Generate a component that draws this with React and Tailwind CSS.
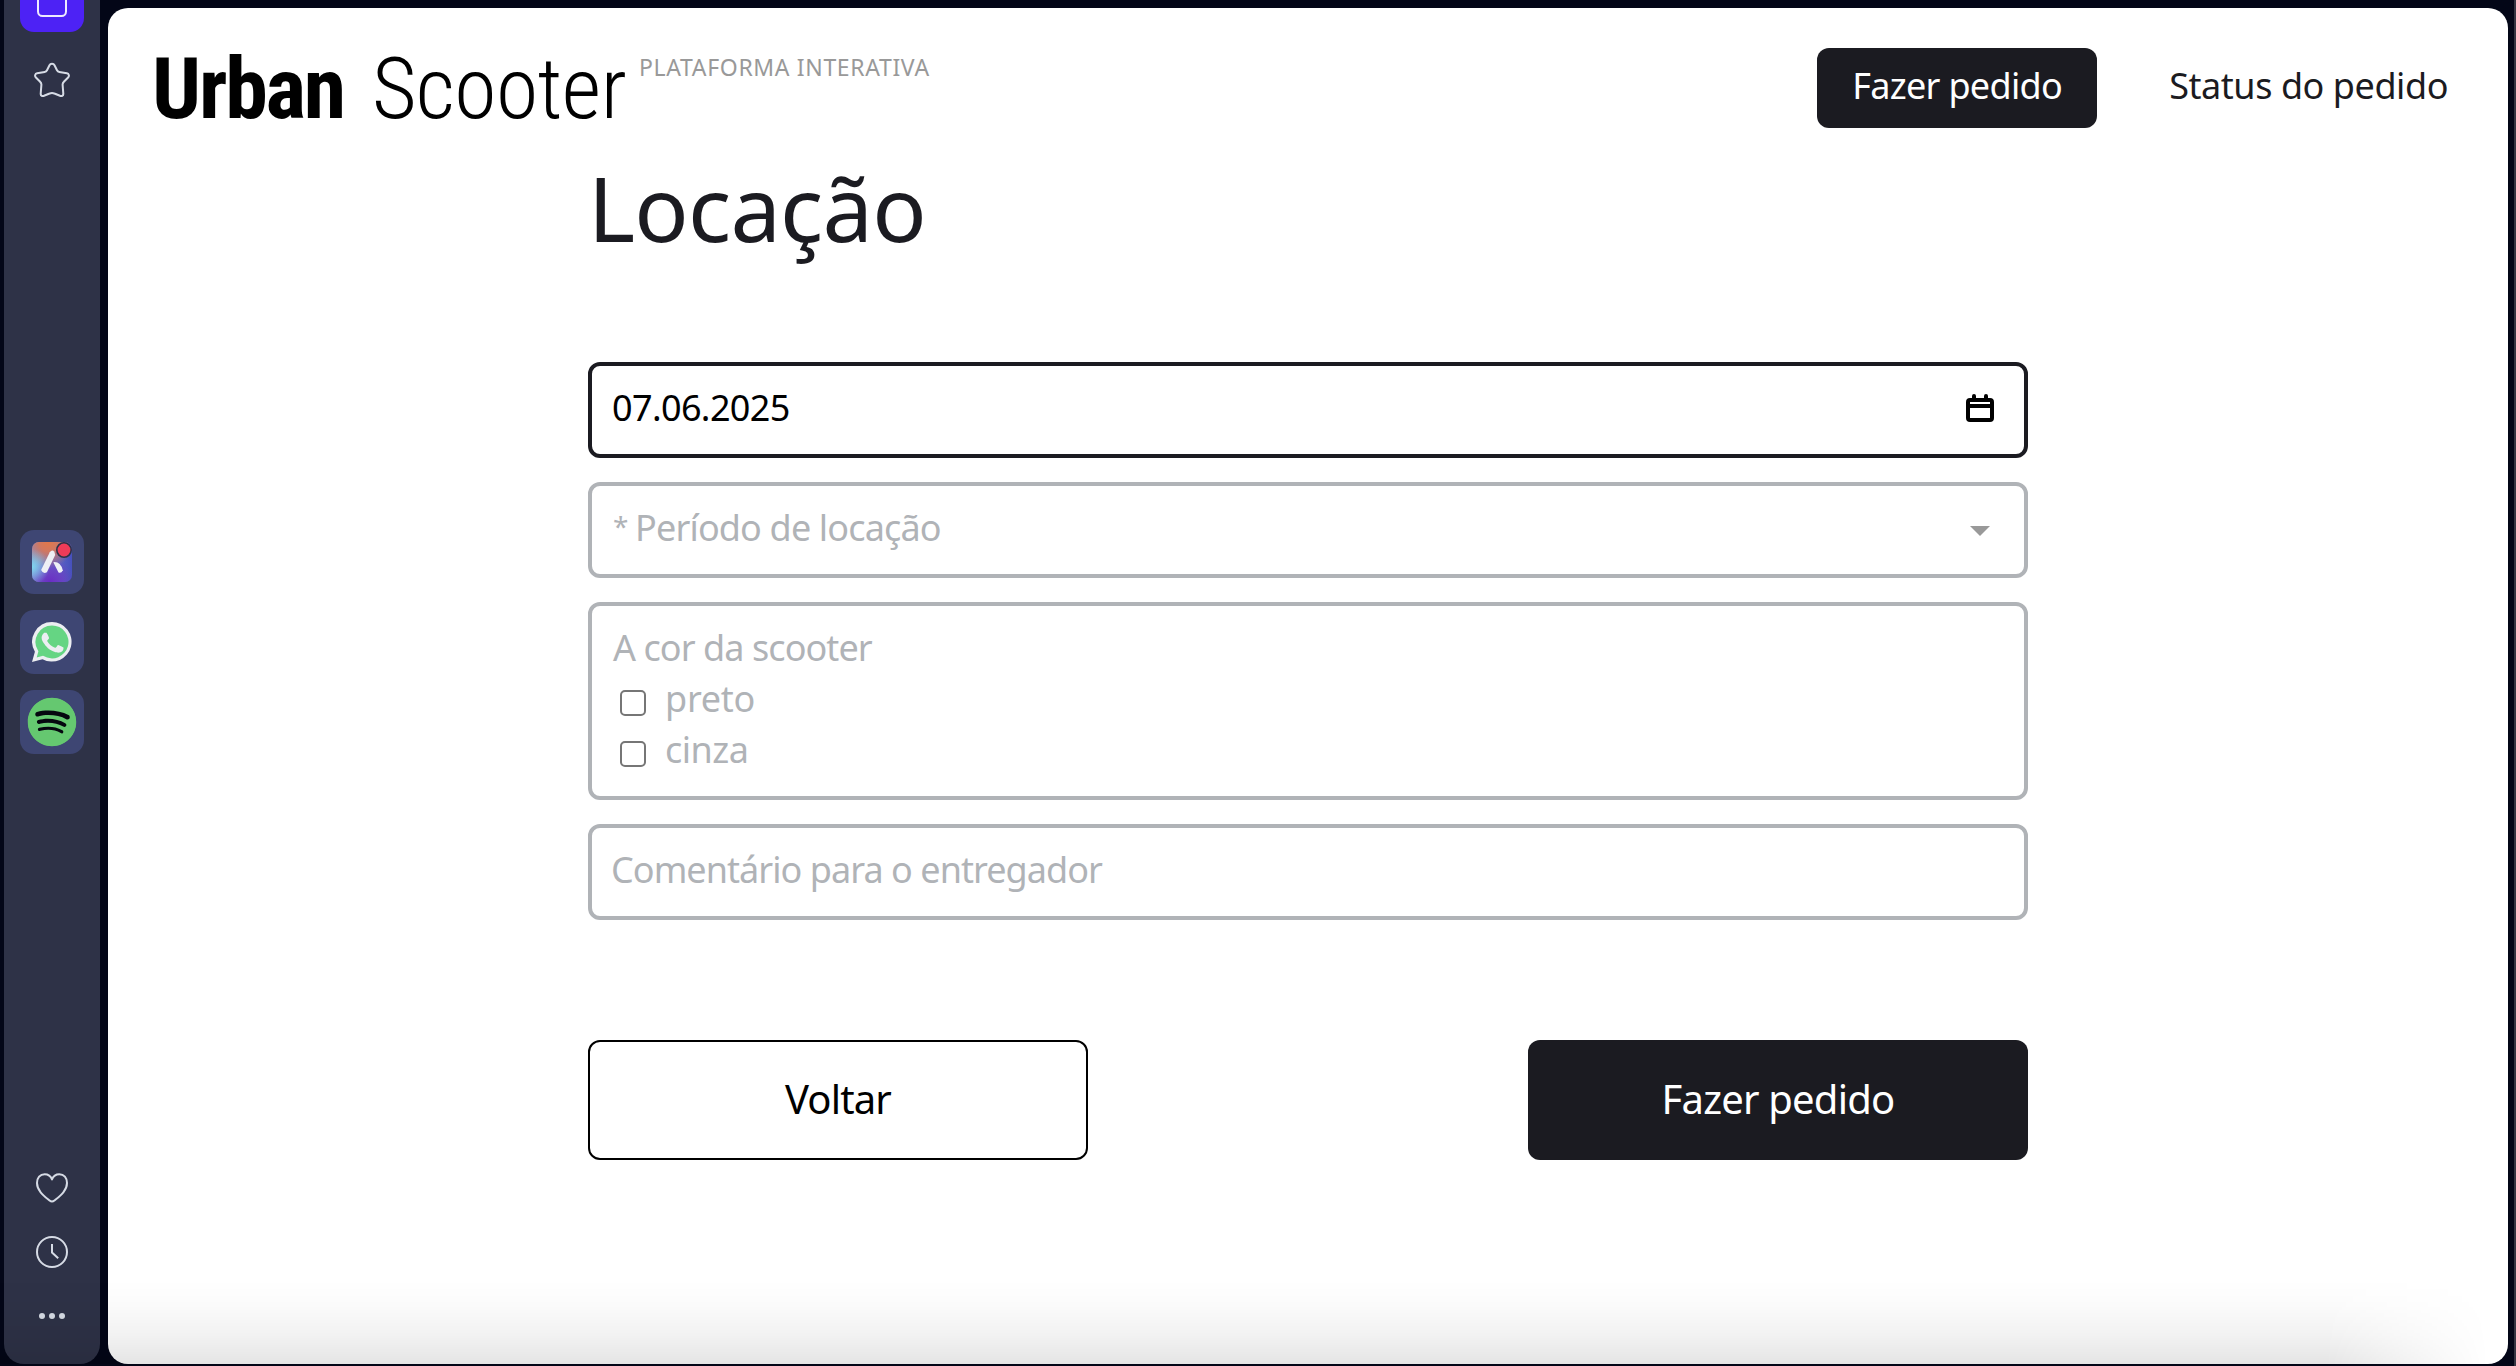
import React from "react";
import { FaSpotify } from "react-icons/fa";

function SideTile({ children }) {
  return (
    <div className="flex h-16 w-16 items-center justify-center rounded-[14px] bg-[#3e4673]">
      {children}
    </div>
  );
}

function AriaIcon() {
  return (
    <svg viewBox="0 0 40 40" className="h-10 w-10 overflow-visible">
      <defs>
        <linearGradient id="ariaBase" x1="0" y1="0.5" x2="1" y2="0.5">
          <stop offset="0" stopColor="#8a8fd0" />
          <stop offset="1" stopColor="#4650bd" />
        </linearGradient>
        <radialGradient id="ariaOrange" cx="0.4" cy="0" r="0.65">
          <stop offset="0" stopColor="#e2784a" />
          <stop offset="0.35" stopColor="#d2785f" />
          <stop offset="1" stopColor="#d2785f" stopOpacity="0" />
        </radialGradient>
        <radialGradient id="ariaCyan" cx="0" cy="0.62" r="0.45">
          <stop offset="0" stopColor="#7fd6ee" />
          <stop offset="1" stopColor="#7fd6ee" stopOpacity="0" />
        </radialGradient>
        <radialGradient id="ariaPurple" cx="0.45" cy="1" r="0.6">
          <stop offset="0" stopColor="#6a2cc4" />
          <stop offset="0.5" stopColor="#6c3bc4" stopOpacity="0.8" />
          <stop offset="1" stopColor="#6c3bc4" stopOpacity="0" />
        </radialGradient>
      </defs>
      <rect width="40" height="40" rx="7" fill="url(#ariaBase)" />
      <rect width="40" height="40" rx="7" fill="url(#ariaPurple)" />
      <rect width="40" height="40" rx="7" fill="url(#ariaOrange)" />
      <rect width="40" height="40" rx="7" fill="url(#ariaCyan)" />
      <path d="M17.800 10.200q2.200-3 4.600-.4l.8 3.200-8.300 17.200q-3.600 2.400-5.800-2.200z" fill="#eef0f5" />
      <path d="M21.300 20.200q7-1 9.500 8-1.400 3.400-4.300 2.300z" fill="#eef0f5" />
      <circle cx="32" cy="8" r="7.200" fill="#ef3b58" stroke="#2e3247" strokeWidth="1.600" />
    </svg>
  );
}

function WhatsAppIcon() {
  return (
    <svg viewBox="0 0 40 40" className="h-10 w-10">
      <path
        d="M20 0A19.800 19.800 0 0 0 2.900 29.800L0 40l10.500-2.700A19.800 19.800 0 1 0 20 0z"
        fill="#eceef2"
      />
      <path
        d="M20 3.400A16.500 16.500 0 0 0 6 28.600l.4.700-1.700 6.100 6.300-1.600.6.300A16.500 16.500 0 1 0 20 3.400z"
        fill="#65d583"
      />
      <path
        d="M15.100 11.700c-.4-.9-.8-.9-1.200-.9h-1c-.4 0-1 .1-1.400.6-.5.500-1.900 1.800-1.900 4.400s1.900 5.100 2.200 5.500c.3.400 3.700 5.900 9.200 8 4.500 1.800 5.500 1.400 6.500 1.300s3.200-1.300 3.600-2.600c.5-1.200.5-2.300.3-2.500-.1-.2-.5-.3-1-.6s-3.200-1.600-3.700-1.700c-.5-.2-.8-.3-1.200.2-.3.600-1.400 1.800-1.700 2.100-.3.400-.6.400-1.200.1s-2.300-.8-4.300-2.600c-1.600-1.400-2.700-3.200-3-3.700-.3-.6 0-.8.200-1.100.3-.3.600-.6.800-.9.300-.4.400-.6.600-.9.200-.4.100-.7 0-1s-1.200-2.900-1.800-3.700z"
        fill="#eceef2"
      />
    </svg>
  );
}

function Sidebar() {
  return (
    <aside className="ml-1 flex h-[1364px] w-24 flex-col items-center rounded-b-[20px] bg-[#2e3247] text-[#d6dbe5]">
      <div className="flex h-8 w-16 items-start justify-center rounded-b-[14px] bg-[#4d22f5]">
        <svg viewBox="0 0 32 18" className="h-[18px] w-8" fill="none" stroke="#eeeaff" strokeWidth="2">
          <path d="M2 0v11.500a4.500 4.500 0 0 0 4.500 4.500h19a4.500 4.500 0 0 0 4.500-4.500V0" />
        </svg>
      </div>
      <svg viewBox="0 0 36 36" className="mt-[30px] h-9 w-9" fill="none" stroke="currentColor" strokeWidth="2" strokeLinejoin="round">
        <path d="M15.500 3.200c.9-1.800 4.100-1.800 5 0l2.500 5.100c.5 1 1.300 1.600 2.300 1.700l7.600 1.300c2 .4 2.700 2.800 1.200 4.200l-4 4c-1.100 1.100-1.600 2-1.500 3.200l.7 9c.1 2-1.800 2.900-3.300 2.100l-5.600-2.300c-1.500-.7-3.300-.7-4.800 0L10 33.800c-1.500.8-3.400-.1-3.300-2.100l.7-9c.1-1.200-.4-2.100-1.500-3.200l-4-4c-1.500-1.400-.8-3.800 1.200-4.200l7.600-1.300c1-.1 1.800-.7 2.300-1.700z" />
      </svg>
      <div className="mt-[432px] flex flex-col gap-4">
        <SideTile><AriaIcon /></SideTile>
        <SideTile><WhatsAppIcon /></SideTile>
        <SideTile>
          <div className="flex h-12 w-12 items-center justify-center rounded-full bg-[radial-gradient(#05070f_60%,#65c870_61%)]">
            <FaSpotify className="h-[50px] w-[50px] shrink-0 text-[#65c870]" />
          </div>
        </SideTile>
      </div>
      <div className="mt-auto flex flex-col items-center pb-[45px]">
        <svg viewBox="0 0 34 30" className="h-[30px] w-[34px]" fill="none" stroke="currentColor" strokeWidth="2" strokeLinejoin="round">
          <path d="M17 6.500C15.700 3 12.800 1.200 9.700 1.200 5 1.200 2 5 2 10c0 7.500 6.500 12.500 12.600 17.600 1.700 1.400 3.100 1.400 4.800 0C25.500 22.500 32 17.500 32 10c0-5-3-8.800-7.700-8.800-3.100 0-6 1.800-7.300 5.300z" />
        </svg>
        <svg viewBox="0 0 34 34" className="mt-8 h-[34px] w-[34px]" fill="none" stroke="currentColor" strokeWidth="2">
          <circle cx="17" cy="17" r="15" />
          <path d="M17 9v8.500l6.200 5.800" />
        </svg>
        <div className="mt-[44px] flex gap-1">
          <i className="h-1.5 w-1.5 rounded-full bg-current" />
          <i className="h-1.5 w-1.5 rounded-full bg-current" />
          <i className="h-1.5 w-1.5 rounded-full bg-current" />
        </div>
      </div>
    </aside>
  );
}

function Header() {
  return (
    <header className="flex h-[139px] items-start pl-12">
      <div className="flex whitespace-nowrap pt-[29px] font-['Roboto_Condensed'] text-[86px] leading-[104px] text-black">
        <span className="-ml-1 w-[220px] font-bold tracking-[-2.2px]">Urban</span>
        <span className="w-[267px] font-light tracking-[-0.6px]">Scooter</span>
      </div>
      <span className="pt-[45px] text-[23px] leading-[28px] tracking-[0.65px] text-[#999]">
        PLATAFORMA INTERATIVA
      </span>
      <nav className="ml-auto flex pr-[60px] pt-10 text-[36px]">
        <button className="h-20 w-[280px] rounded-[12px] bg-[#1b1b21] pb-1 tracking-[-0.69px] text-white">
          Fazer pedido
        </button>
        <button className="ml-[72px] h-20 whitespace-nowrap pb-1 tracking-[-0.44px] text-[#1b1b21]">
          Status do pedido
        </button>
      </nav>
    </header>
  );
}

function ColorOption({ label, tracking }) {
  return (
    <label className="flex h-[51px] items-center pl-[7px]">
      <input type="checkbox" className="mt-[9px] h-[26px] w-[26px] appearance-none rounded-[5px] border-2 border-[#767676] bg-white" />
      <span className={"ml-[19px] leading-[51px] " + tracking}>{label}</span>
    </label>
  );
}

function RentForm() {
  return (
    <main className="ml-[480px] w-[1440px] text-[36px] text-[#b0b3b7]">
      <h1 className="h-[215px] text-[90px] leading-[120px] tracking-[-0.8px] text-[#1b1b21]">Locação</h1>
      <div className="flex flex-col gap-6">
        <div className="flex h-24 items-center justify-between rounded-[12px] border-4 border-[#1b1b21] pl-5 pr-[30px] text-black">
          <span className="pb-1 tracking-[-0.63px]">07.06.2025</span>
          <svg viewBox="0 0 28 28" className="mb-1 h-7 w-7" fill="none" stroke="#000" strokeWidth="4">
            <rect x="2" y="6" width="24" height="20" rx="2" />
            <path d="M2 12h24" />
            <path d="M8 2v4M20 2v4" strokeLinecap="round" />
          </svg>
        </div>
        <div className="flex h-24 items-center justify-between rounded-[12px] border-4 border-[#b0b3b7] pl-[21px] pr-[34px]">
          <div className="flex pb-1 leading-[54px] tracking-[-0.84px]">
            <span className="-mt-0.5 w-[22px] text-[28px]">*</span>
            <span>Período de locação</span>
          </div>
          <svg viewBox="0 0 20 10" className="mt-0.5 h-2.5 w-5" fill="#999">
            <path d="M0 0h20L10 10z" />
          </svg>
        </div>
        <div className="h-[198px] rounded-[12px] border-4 border-[#b0b3b7] pl-[21px] pt-4">
          <div className="leading-[51px] tracking-[-0.93px]">A cor da scooter</div>
          <ColorOption label="preto" tracking="tracking-[-0.25px]" />
          <ColorOption label="cinza" tracking="tracking-[-0.5px]" />
        </div>
        <div className="flex h-24 items-center rounded-[12px] border-4 border-[#b0b3b7] pl-[19px]">
          <span className="pb-1 tracking-[-0.95px]">Comentário para o entregador</span>
        </div>
      </div>
      <div className="mt-[120px] flex justify-between text-[40px]">
        <button className="h-[120px] w-[500px] rounded-[12px] border-2 border-black pb-[3px] tracking-[-0.86px] text-black">
          Voltar
        </button>
        <button className="h-[120px] w-[500px] rounded-[12px] bg-[#1b1b21] pb-[3px] tracking-[-0.8px] text-white">
          Fazer pedido
        </button>
      </div>
    </main>
  );
}

export default function App() {
  return (
    <div className="relative flex h-[1366px] w-[2516px] overflow-hidden border-r-2 border-[#353542] bg-[#030617] font-['Noto_Sans',sans-serif]">
      <Sidebar />
      <div className="ml-2 mt-2 h-[1356px] w-[2400px] rounded-[20px] bg-white">
        <Header />
        <RentForm />
      </div>
      <div className="pointer-events-none absolute bottom-0.5 left-0 h-[84px] w-full bg-[linear-gradient(to_bottom,transparent,rgba(0,0,0,0.015)_30%,rgba(0,0,0,0.05)_65%,rgba(0,0,0,0.1))] [mask-image:linear-gradient(to_right,#000_92.5%,transparent_99%)]" />
    </div>
  );
}
